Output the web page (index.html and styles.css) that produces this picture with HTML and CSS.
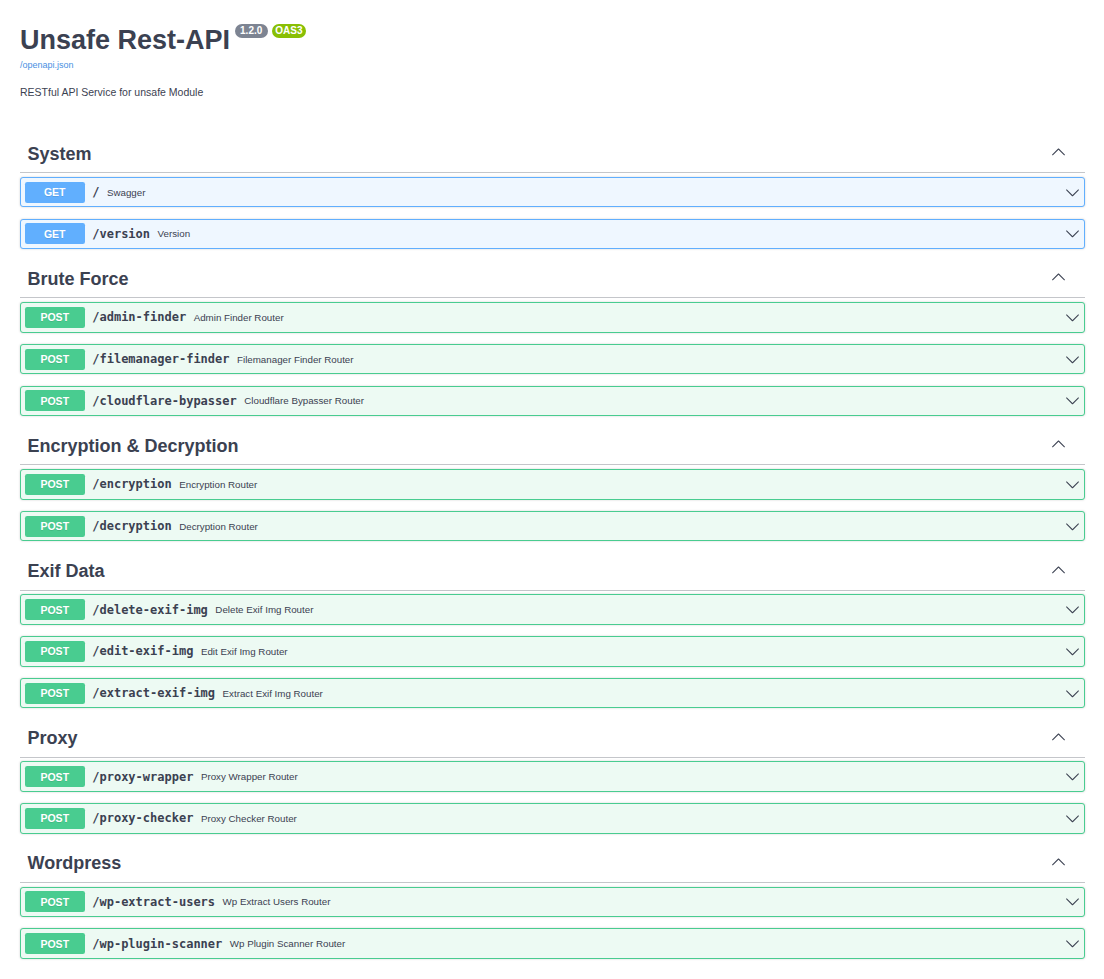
FILE: index.html
```html
<!DOCTYPE html>
<html lang="en">
<head>
<meta charset="utf-8">
<title>Unsafe Rest-API</title>
<link rel="stylesheet" href="styles.css">
</head>
<body>
<svg class="defs" width="0" height="0" aria-hidden="true">
  <defs>
    <symbol id="arrow-down" viewBox="0 0 20 20"><path d="M17.418 6.109c.272-.268.709-.268.979 0s.271.701 0 .969l-7.908 7.83c-.27.268-.707.268-.979 0l-7.908-7.83c-.27-.268-.27-.701 0-.969.271-.268.709-.268.979 0L10 13.25l7.418-7.141z"/></symbol>
    <symbol id="arrow-up" viewBox="0 0 20 20"><path d="M17.418 14.908c.272.268.709.268.979 0s.271-.701 0-.969l-7.908-7.83c-.27-.268-.707-.268-.979 0l-7.908 7.830c-.27.268-.27.701 0 .969.271.268.709.268.979 0L10 7.767l7.418 7.141z"/></symbol>
  </defs>
</svg>
<div class="wrapper">
  <div class="info">
    <h2 class="title"><span>Unsafe Rest-API</span><span class="badge">1.2.0</span><span class="badge oas">OAS3</span></h2>
    <a class="url" href="#">/openapi.json</a>
    <p class="desc">RESTful API Service for unsafe Module</p>
  </div>

  <section class="tag-section">
    <h3 class="tag"><span>System</span><span class="tag-btn"><svg class="arrow"><use href="#arrow-up"/></svg></span></h3>
    <div class="opblock get"><div class="summary"><span class="method">GET</span><span class="path">/</span><span class="sdesc">Swagger</span><svg class="arrow"><use href="#arrow-down"/></svg></div></div>
    <div class="opblock get"><div class="summary"><span class="method">GET</span><span class="path">/version</span><span class="sdesc">Version</span><svg class="arrow"><use href="#arrow-down"/></svg></div></div>
  </section>

  <section class="tag-section">
    <h3 class="tag"><span>Brute Force</span><span class="tag-btn"><svg class="arrow"><use href="#arrow-up"/></svg></span></h3>
    <div class="opblock post"><div class="summary"><span class="method">POST</span><span class="path">/admin-finder</span><span class="sdesc">Admin Finder Router</span><svg class="arrow"><use href="#arrow-down"/></svg></div></div>
    <div class="opblock post"><div class="summary"><span class="method">POST</span><span class="path">/filemanager-finder</span><span class="sdesc">Filemanager Finder Router</span><svg class="arrow"><use href="#arrow-down"/></svg></div></div>
    <div class="opblock post"><div class="summary"><span class="method">POST</span><span class="path">/cloudflare-bypasser</span><span class="sdesc">Cloudflare Bypasser Router</span><svg class="arrow"><use href="#arrow-down"/></svg></div></div>
  </section>

  <section class="tag-section">
    <h3 class="tag"><span>Encryption &amp; Decryption</span><span class="tag-btn"><svg class="arrow"><use href="#arrow-up"/></svg></span></h3>
    <div class="opblock post"><div class="summary"><span class="method">POST</span><span class="path">/encryption</span><span class="sdesc">Encryption Router</span><svg class="arrow"><use href="#arrow-down"/></svg></div></div>
    <div class="opblock post"><div class="summary"><span class="method">POST</span><span class="path">/decryption</span><span class="sdesc">Decryption Router</span><svg class="arrow"><use href="#arrow-down"/></svg></div></div>
  </section>

  <section class="tag-section">
    <h3 class="tag"><span>Exif Data</span><span class="tag-btn"><svg class="arrow"><use href="#arrow-up"/></svg></span></h3>
    <div class="opblock post"><div class="summary"><span class="method">POST</span><span class="path">/delete-exif-img</span><span class="sdesc">Delete Exif Img Router</span><svg class="arrow"><use href="#arrow-down"/></svg></div></div>
    <div class="opblock post"><div class="summary"><span class="method">POST</span><span class="path">/edit-exif-img</span><span class="sdesc">Edit Exif Img Router</span><svg class="arrow"><use href="#arrow-down"/></svg></div></div>
    <div class="opblock post"><div class="summary"><span class="method">POST</span><span class="path">/extract-exif-img</span><span class="sdesc">Extract Exif Img Router</span><svg class="arrow"><use href="#arrow-down"/></svg></div></div>
  </section>

  <section class="tag-section">
    <h3 class="tag"><span>Proxy</span><span class="tag-btn"><svg class="arrow"><use href="#arrow-up"/></svg></span></h3>
    <div class="opblock post"><div class="summary"><span class="method">POST</span><span class="path">/proxy-wrapper</span><span class="sdesc">Proxy Wrapper Router</span><svg class="arrow"><use href="#arrow-down"/></svg></div></div>
    <div class="opblock post"><div class="summary"><span class="method">POST</span><span class="path">/proxy-checker</span><span class="sdesc">Proxy Checker Router</span><svg class="arrow"><use href="#arrow-down"/></svg></div></div>
  </section>

  <section class="tag-section">
    <h3 class="tag"><span>Wordpress</span><span class="tag-btn"><svg class="arrow"><use href="#arrow-up"/></svg></span></h3>
    <div class="opblock post"><div class="summary"><span class="method">POST</span><span class="path">/wp-extract-users</span><span class="sdesc">Wp Extract Users Router</span><svg class="arrow"><use href="#arrow-down"/></svg></div></div>
    <div class="opblock post"><div class="summary"><span class="method">POST</span><span class="path">/wp-plugin-scanner</span><span class="sdesc">Wp Plugin Scanner Router</span><svg class="arrow"><use href="#arrow-down"/></svg></div></div>
  </section>
</div>
</body>
</html>
```
FILE: styles.css
```css
html, body {
  margin: 0;
  padding: 0;
  background: #fff;
}
body {
  font-family: "Liberation Sans", Arial, sans-serif;
  color: #3b4151;
}
.defs {
  position: absolute;
  width: 0;
  height: 0;
  overflow: hidden;
}
.wrapper {
  padding: 0 19px 0 20px;
}
.info {
  padding-top: 25px;
  margin-bottom: 37px;
}
.title {
  display: flex;
  align-items: flex-start;
  margin: 0;
  font-size: 27px;
  line-height: 31px;
  font-weight: 700;
  color: #3b4151;
}
.badge {
  margin: -1px 0 0 4.5px;
  padding: 1px 5.5px;
  font-size: 10px;
  line-height: 12px;
  font-weight: 700;
  color: #fff;
  background: #7d8492;
  border-radius: 40px;
}
.badge.oas {
  padding: 1px 3px;
  background: #89bf04;
}
.url {
  display: block;
  margin-top: 4px;
  font-size: 9px;
  line-height: 11px;
  color: #4990e2;
  text-decoration: none;
}
.desc {
  margin: 15px 0 0;
  font-size: 10.5px;
  line-height: 12px;
  color: #3b4151;
}
.tag {
  display: flex;
  align-items: center;
  margin: 0 0 3.75px;
  padding: 7.5px 15px 7.5px 7.5px;
  font-size: 18px;
  line-height: 22px;
  font-weight: 700;
  color: #3b4151;
  border-bottom: 1px solid rgba(59, 65, 81, 0.3);
}
.tag > span:first-child {
  flex: 1;
}
.tag-btn {
  display: flex;
  margin: -4px 4.5px 0 0;
}
.arrow {
  width: 15px;
  height: 15px;
  fill: #3b4151;
  flex: none;
}
.opblock {
  margin: 0 0 11.25px;
  border: 1px solid #61affe;
  border-radius: 3px;
  box-shadow: 0 0 2.25px rgba(0, 0, 0, 0.19);
}
.opblock.get {
  background: #eff7ff;
  border-color: #61affe;
}
.opblock.post {
  background: #edfaf3;
  border-color: #49cc90;
}
.summary {
  display: flex;
  align-items: center;
  padding: 3.75px;
}
.method {
  min-width: 60px;
  padding: 4.5px 0;
  font-size: 10.5px;
  line-height: 12px;
  font-weight: 700;
  text-align: center;
  color: #fff;
  border-radius: 2.25px;
  text-shadow: 0 1px 0 rgba(0, 0, 0, 0.1);
}
.get .method {
  background: #61affe;
}
.post .method {
  background: #49cc90;
}
.path {
  padding: 0 7.5px;
  font-family: "DejaVu Sans Mono", monospace;
  font-size: 12px;
  font-weight: 700;
  color: #3b4151;
}
.sdesc {
  flex: 1;
  font-size: 9.75px;
  color: #3b4151;
}
```
